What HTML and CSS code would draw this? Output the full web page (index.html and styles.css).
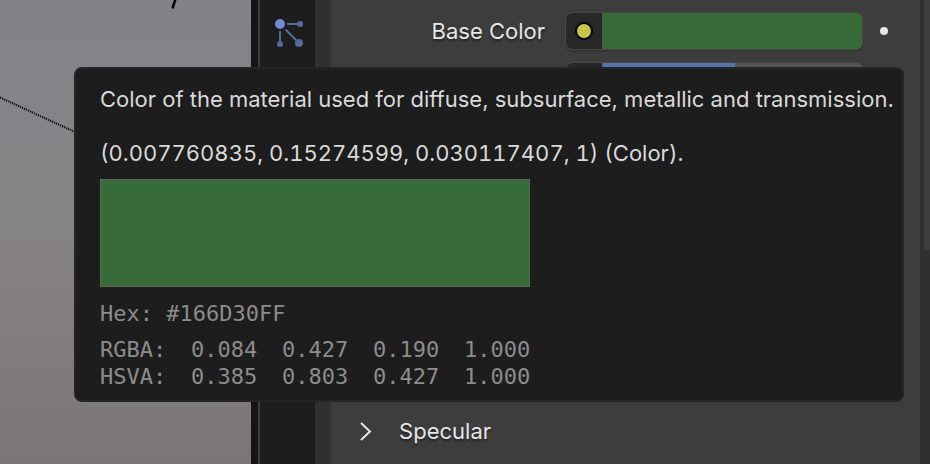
FILE: index.html
```
<!DOCTYPE html>
<html lang="en">
<head>
<meta charset="utf-8">
<title>Material Properties</title>
<link rel="stylesheet" href="styles.css">
</head>
<body>
<div class="editor">
  <div class="viewport">
    <svg class="guides" width="251" height="464" viewBox="0 0 251 464" aria-hidden="true">
      <path d="M0 97.500L75 132" stroke="#0b0b0b" stroke-width="2" stroke-dasharray="1.200 1"/>
      <path d="M175.500 -1L172.500 8.500" stroke="#080808" stroke-width="2.500"/>
    </svg>
  </div>
  <div class="divider"></div>
  <nav class="tabs">
    <button class="tab" type="button" aria-label="Particles">
      <svg width="30" height="30" viewBox="0 0 30 30">
        <g stroke="#56699c" stroke-width="2" fill="#56699c">
          <path d="M13 7H25M6 14V25M11.500 12.500L24 25"/>
          <g stroke="none"><circle cx="26" cy="7" r="3"/><circle cx="6" cy="27" r="3"/><circle cx="25" cy="26" r="4"/></g>
        </g>
        <circle cx="6" cy="7" r="5" fill="#7189d2"/>
      </svg>
    </button>
  </nav>
  <main class="panel">
    <div class="row">
      <span class="label">Base Color</span>
      <div class="field">
        <button class="socket" type="button" aria-label="Color input"><span class="socket-dot"></span></button>
        <button class="color" type="button" aria-label="Base Color"></button>
      </div>
      <button class="key" type="button" aria-label="Animate property"></button>
    </div>
    <div class="row row-next">
      <span class="label"></span>
      <div class="field">
        <span class="socket"></span>
        <span class="slider"></span>
      </div>
    </div>
    <button class="section" type="button">
      <svg width="14" height="20" viewBox="0 0 14 20" aria-hidden="true"><path d="M2 2L11 10.500L2 19" fill="none" stroke="#e6e6e6" stroke-width="2"/></svg>
      <span>Specular</span>
    </button>
  </main>
  <div class="scrollbar"><div class="thumb"></div></div>
</div>
<div class="tooltip" role="tooltip">
  <p class="text">Color of the material used for diffuse, subsurface, metallic and transmission.</p>
  <p class="text value">(0.007760835, 0.15274599, 0.030117407, 1) (Color).</p>
  <div class="swatch"></div>
  <p class="hex">Hex: #166D30FF</p>
  <table class="channels">
    <tr><th>RGBA:</th><td>0.084</td><td>0.427</td><td>0.190</td><td>1.000</td></tr>
    <tr><th>HSVA:</th><td>0.385</td><td>0.803</td><td>0.427</td><td>1.000</td></tr>
  </table>
</div>
</body>
</html>
```
FILE: styles.css
```
* { box-sizing: border-box; }
body {
  margin: 0;
  overflow: hidden;
  font: 22px/28px Inter, sans-serif;
  font-variation-settings: "opsz" 32;
  color: #e6e6e6;
  background: #303030;
}
button {
  margin: 0;
  padding: 0;
  border: 0;
  font: inherit;
  font-variation-settings: inherit;
  color: inherit;
  background: none;
}
.editor { display: flex; height: 100vh; }
.viewport {
  flex: 0 0 27%;
  overflow: hidden;
  background: linear-gradient(#848286, #878488 45%, #7b7575);
}
.guides { display: block; }
.divider { width: 9px; background: #141414; border-right: 2px solid #3d3d3d; }
.tabs { width: 55px; background: #1d1d1d; padding: 17px 14px; }
.tab { display: block; width: 30px; height: 30px; }
.tab svg { display: block; }
.panel {
  flex: 1;
  display: flex;
  flex-direction: column;
  border-left: 16px solid #303030;
  background: #3d3d3d;
  padding: 12px 32px 19px 28px;
  text-shadow: 0 2px 2px #222;
}
.row { display: flex; align-items: center; gap: 20px; height: 38px; }
.row-next { margin-top: 12px; }
.label { flex: 1; text-align: right; }
.field {
  display: flex;
  width: 298px;
  height: 38px;
  border: 1px solid #484848;
  border-radius: 7px;
  overflow: hidden;
  background: #545454;
  box-shadow: 0 2px 0 #343434;
}
.socket { display: grid; place-items: center; width: 36px; background: #282828; }
.socket-dot { width: 18px; height: 18px; border: 2px solid #000; border-radius: 50%; background: #c7c744; }
.color { flex: 1; margin-left: 1px; background: #376b37; }
.slider { flex: 1; margin-left: 1px; background: linear-gradient(90deg, #5374ad 51%, #545454 51%); }
.key { width: 8px; height: 8px; margin-left: -3px; border-radius: 50%; background: #e6e6e6; }
.row-next .field { margin-right: 25px; }
.section { display: flex; align-items: center; gap: 26px; margin-top: auto; text-shadow: inherit; }
.scrollbar { width: 10px; padding-left: 4px; background: #303030; }
.thumb { height: 54%; border-radius: 0 0 3px 3px; background: #3d3d3d; }
.tooltip {
  position: absolute;
  top: 67px;
  left: 74px;
  right: 26px;
  padding: 16px 24px 10px;
  border: 2px solid #252525;
  border-radius: 8px;
  background: #1d1d1d;
  color: #d9d9d9;
}
.tooltip p { margin: 0; white-space: nowrap; }
.tooltip .value { margin-top: 26px; font-variant-numeric: tabular-nums; }
.swatch { width: 430px; height: 108px; margin-top: 12px; border: 1px solid #5a685a; background: #376b37; }
.tooltip .hex, .channels { font: 22px/28px "DejaVu Sans Mono", monospace; color: #8c8c8c; }
.tooltip .hex { margin-top: 13px; }
.channels { margin-top: 8px; border-spacing: 0; line-height: 27px; }
.channels th, .channels td { width: 91px; padding: 0; font-weight: 400; text-align: left; }
```
